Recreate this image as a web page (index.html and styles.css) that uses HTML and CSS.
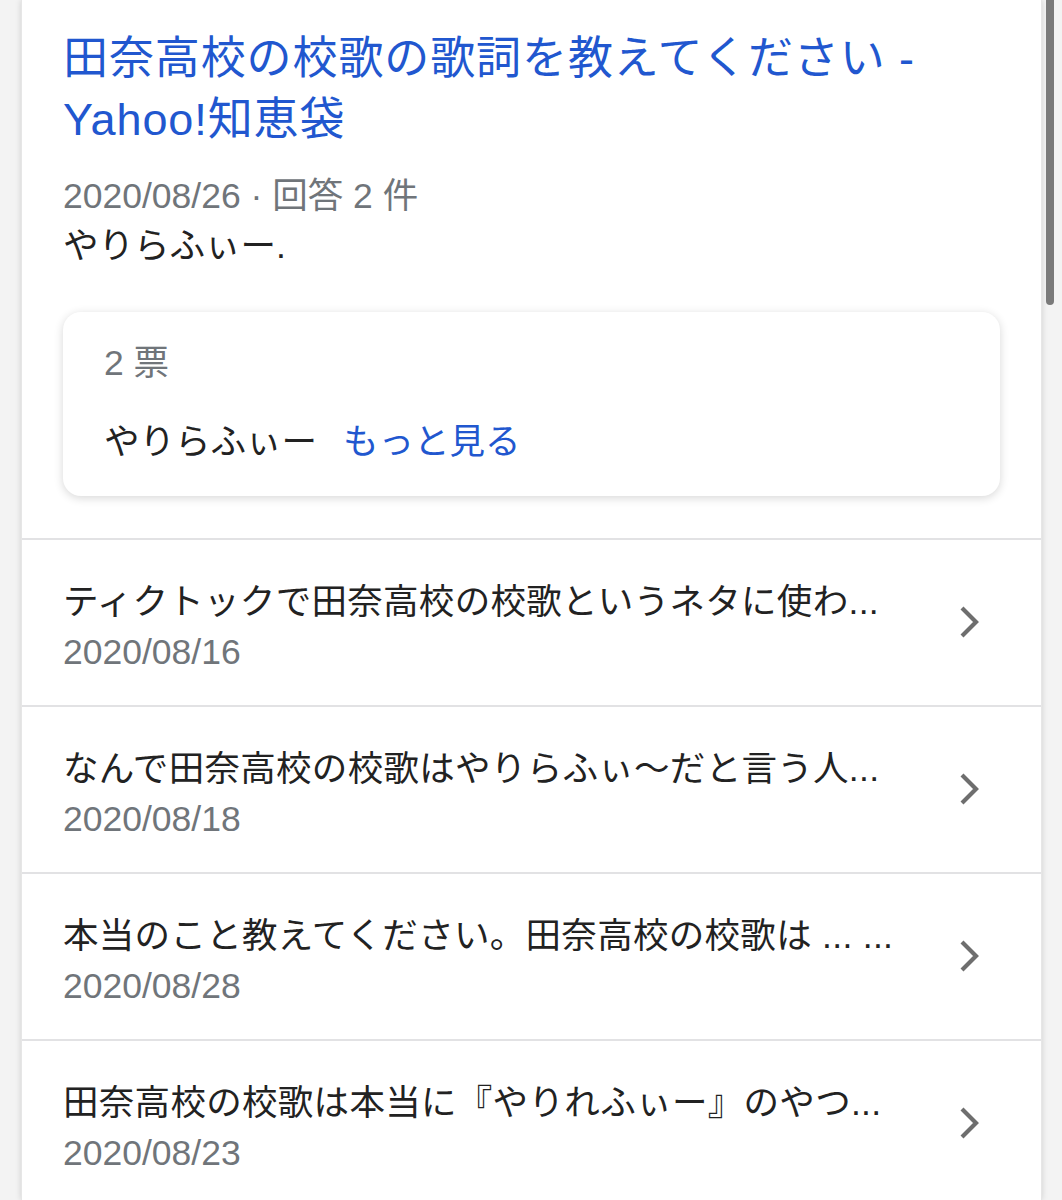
FILE: index.html
```html
<!DOCTYPE html>
<html lang="ja">
<head>
<meta charset="utf-8">
<title>田奈高校の校歌の歌詞を教えてください - Yahoo!知恵袋</title>
<link rel="stylesheet" href="styles.css">
</head>
<body>
<div class="page">
  <div class="card">
    <div class="head">
      <a class="title" href="#">田奈高校の校歌の歌詞を教えてください - Yahoo!知恵袋</a>
      <div class="meta">2020/08/26 · 回答 2 件</div>
      <div class="snippet">やりらふぃー.</div>
      <div class="votes">
        <div class="votes-count">2 票</div>
        <div class="votes-answer">やりらふぃー <a class="more" href="#">もっと見る</a></div>
      </div>
    </div>
    <div class="row">
      <div class="row-text">
        <div class="row-title">ティクトックで田奈高校の校歌というネタに使わ...</div>
        <div class="row-date">2020/08/16</div>
      </div>
      <svg class="chev" width="24" height="34" viewBox="0 0 24 34"><polyline points="4,3 18,17 4,31" fill="none" stroke="#6e6e6e" stroke-width="4.2"/></svg>
    </div>
    <div class="row">
      <div class="row-text">
        <div class="row-title">なんで田奈高校の校歌はやりらふぃ～だと言う人...</div>
        <div class="row-date">2020/08/18</div>
      </div>
      <svg class="chev" width="24" height="34" viewBox="0 0 24 34"><polyline points="4,3 18,17 4,31" fill="none" stroke="#6e6e6e" stroke-width="4.2"/></svg>
    </div>
    <div class="row">
      <div class="row-text">
        <div class="row-title">本当のこと教えてください。田奈高校の校歌は ... ...</div>
        <div class="row-date">2020/08/28</div>
      </div>
      <svg class="chev" width="24" height="34" viewBox="0 0 24 34"><polyline points="4,3 18,17 4,31" fill="none" stroke="#6e6e6e" stroke-width="4.2"/></svg>
    </div>
    <div class="row">
      <div class="row-text">
        <div class="row-title">田奈高校の校歌は本当に『やりれふぃー』のやつ...</div>
        <div class="row-date">2020/08/23</div>
      </div>
      <svg class="chev" width="24" height="34" viewBox="0 0 24 34"><polyline points="4,3 18,17 4,31" fill="none" stroke="#6e6e6e" stroke-width="4.2"/></svg>
    </div>
  </div>
  <div class="scroll-thumb"></div>
</div>
</body>
</html>
```

FILE: styles.css
```css
html, body {
  margin: 0;
  padding: 0;
}
body {
  background: #f3f3f3;
  font-family: "Liberation Sans", "Noto Sans CJK JP", sans-serif;
  color: #222222;
  overflow: hidden;
}
.page {
  position: relative;
  padding: 0 20px 0 21px;
  height: 1200px;
  box-sizing: border-box;
}
.card {
  background: #ffffff;
  height: 1200px;
  box-shadow: 0 0 6px rgba(0, 0, 0, 0.15);
  border-left: 1px solid #e6e6e6;
  border-right: 1px solid #e6e6e6;
}
.head {
  padding: 28px 41px 42px 41px;
}
.title {
  display: block;
  font-size: 45px;
  line-height: 61px;
  letter-spacing: 0.9px;
  color: #2157cf;
  text-decoration: none;
  padding-right: 80px;
}
.meta {
  margin-top: 21px;
  font-size: 35.5px;
  line-height: 50px;
  color: #70757a;
}
.snippet {
  font-size: 35.5px;
  line-height: 50px;
  color: #222222;
}
.votes {
  margin-top: 41px;
  border-radius: 18px;
  background: #ffffff;
  box-shadow: 0 2px 10px rgba(0, 0, 0, 0.16);
  padding: 29px 41px 32px 41px;
}
.votes-count {
  font-size: 35.5px;
  line-height: 44px;
  color: #70757a;
}
.votes-answer {
  margin-top: 35px;
  font-size: 35.5px;
  line-height: 44px;
  color: #222222;
}
.more {
  margin-left: 16px;
  color: #2157cf;
  text-decoration: none;
}
.row {
  display: flex;
  align-items: center;
  border-top: 2px solid #e2e2e4;
  padding: 37px 59px 28px 41px;
}
.row-text {
  flex: 1;
  min-width: 0;
}
.row-title {
  font-size: 35.5px;
  line-height: 50px;
  letter-spacing: 0.3px;
  color: #222222;
  white-space: nowrap;
  overflow: hidden;
}
.row-date {
  font-size: 35.5px;
  line-height: 50px;
  color: #70757a;
}
.chev {
  flex: none;
  margin-left: 40px;
  margin-bottom: 10px;
}
.scroll-thumb {
  position: absolute;
  top: -10px;
  left: 1046px;
  width: 8px;
  height: 315px;
  border-radius: 4px;
  background: #7a7a7a;
}
```
